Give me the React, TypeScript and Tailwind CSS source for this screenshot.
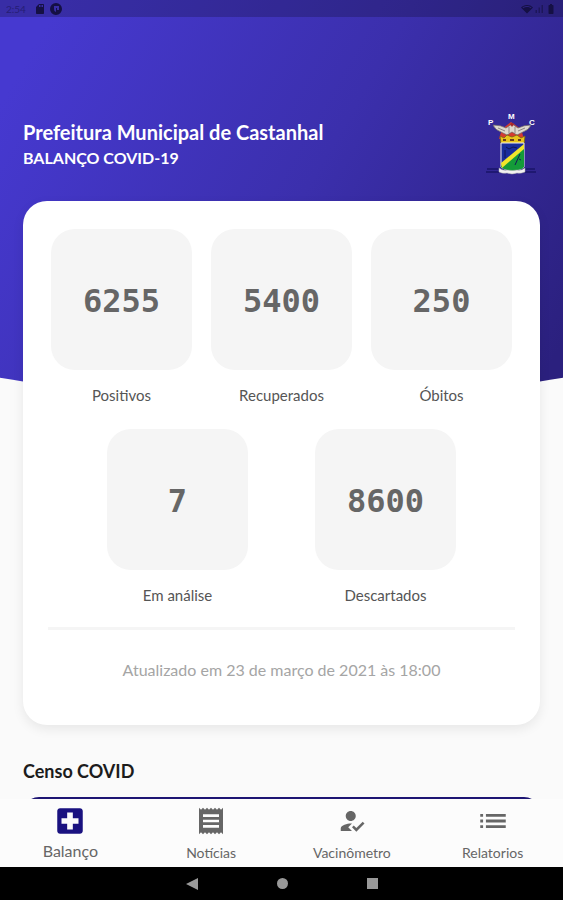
import type { ReactNode } from "react";
import { MdLocalHospital, MdReceipt, MdHowToReg, MdList, MdSdCard, MdNetworkWifi, MdSignalCellularAlt, MdBatteryFull } from "react-icons/md";

type Stat = { label: string; value: string };

const firstRow: Stat[] = [
  { label: "Positivos", value: "6255" },
  { label: "Recuperados", value: "5400" },
  { label: "Óbitos", value: "250" },
];

const secondRow: Stat[] = [
  { label: "Em análise", value: "7" },
  { label: "Descartados", value: "8600" },
];

function StatTile({ label, value }: Stat) {
  return (
    <div className="flex w-[141px] flex-col items-center">
      <dd className="flex aspect-square w-full items-center justify-center rounded-3xl bg-[#f5f5f5] pt-0.5 font-['DejaVu_Sans_Mono',monospace] text-[32px] font-bold text-[#666]">
        {value}
      </dd>
      <dt className="order-last mt-[13px] text-[15px] leading-6 text-[#555]">{label}</dt>
    </div>
  );
}

function NavItem({ label, icon, active = false }: { label: string; icon: ReactNode; active?: boolean }) {
  return (
    <button type="button" className="flex flex-1 flex-col items-center pt-2">
      <span className={active ? "flex h-7 items-center text-[#1a1280]" : "flex h-7 items-center text-[#666]"}>{icon}</span>
      <span className={active ? "text-base leading-8 text-[#666]" : "text-sm leading-9 text-[#666]"}>{label}</span>
    </button>
  );
}

function Crest() {
  return (
    <svg viewBox="0 0 54 64" className="h-16 w-[54px]" role="img" aria-label="Brasão de Castanhal">
      <path d="M2 61h50M3 58h13M38 58h13" stroke="#1a1468" strokeWidth="1.5" />
      <g fill="#fff" fontFamily="Liberation Sans" fontSize="8" fontWeight="bold">
        <text x="4" y="14">P</text>
        <text x="24" y="8">M</text>
        <text x="45" y="14">C</text>
      </g>
      <path d="M18 18l9-7 10 7 3 10H15z" fill="#d63a30" />
      <path d="M9 14q8 0 13 3l6-4 6 4q6-3 13-3-2 5-8 7l-6 3-5-3-5 3-6-3q-6-2-8-7z" fill="#ddd8ce" stroke="#6b6362" strokeWidth=".7" />
      <path d="M14 17l7 3M41 17l-7 3M25 16v6M31 16v6" stroke="#8d8584" />
      <path d="M26 13q2-2 4 0l-2 3z" fill="#a52828" />
      <path d="M16 25l4 2 3-3 5 2 5-2 4 3 4-2-1 8H17z" fill="#e8c51c" stroke="#766316" strokeWidth=".8" />
      <path d="M19 29h3M26 29h4M34 29h3" stroke="#6a3c1b" strokeWidth="2" />
      <path d="M17 32h23v24q-3 3-11.500 4Q20 59 17 56z" fill="#182d9d" stroke="#eee" strokeWidth="1" />
      <path d="M40 36v20q-3 3-11.500 4-8-1-11.500-4v-1z" fill="#149b39" />
      <path d="M40 33v5L18 57l-1-5z" fill="#f1e52b" />
      <path d="M22 36l3 2 4-2 4 1M21 39v8M36 43l-5 11M35 48l2 1" stroke="#101657" fill="none" />
      <path d="M15 57q4 3 8 2 6 1 10 0 4 1 8-2v4q-5 2-8 1-5 2-10 0-4 1-8-1z" fill="#f2f2f2" stroke="#aaa" strokeWidth=".5" />
    </svg>
  );
}

export default function App() {
  return (
    <div className="relative isolate flex h-screen flex-col overflow-hidden bg-[#fafafa] font-[Lato,sans-serif]">
      <div className="absolute -inset-x-[15%] top-0 -z-10 h-[397px] rounded-b-[50%_53px] bg-linear-[120deg,#4639d0_15%,#3b2fac_52%,#2b207e_88%]" />

      <div className="flex h-[17px] shrink-0 items-center bg-black/20 px-[6px] text-[#151044]">
        <span className="text-[10px] leading-4 opacity-50">2:54</span>
        <MdSdCard className="ml-2 size-3" />
        <svg viewBox="0 0 12 12" className="ml-1 size-3" aria-hidden="true">
          <path fillRule="evenodd" d="M6 0a6 6 0 100 12A6 6 0 006 0zM4 3h5v4H7V5H6v4a3 3 0 01-2-3z" fill="currentColor" />
        </svg>
        <MdNetworkWifi className="ml-auto size-3" />
        <MdSignalCellularAlt className="size-3 opacity-60" />
        <MdBatteryFull className="size-3" />
      </div>

      <main className="min-h-0 flex-1 overflow-hidden px-[23px]">
        <header className="flex items-center justify-between pt-[94px] pr-[2px] text-white">
          <div className="pt-1">
            <h1 className="text-xl leading-[26px] font-bold">Prefeitura Municipal de Castanhal</h1>
            <p className="text-base leading-[26px] font-bold">BALANÇO COVID-19</p>
          </div>
          <Crest />
        </header>

        <section className="mt-[26px] h-[524px] rounded-3xl bg-white px-[25px] pt-7 shadow-[0_4px_12px_rgba(0,0,0,0.08)]">
          <dl className="flex flex-col gap-[22px]">
            <div className="flex justify-between px-[3px]">
              {firstRow.map((s) => <StatTile key={s.label} {...s} />)}
            </div>
            <div className="flex justify-center gap-[67px]">
              {secondRow.map((s) => <StatTile key={s.label} {...s} />)}
            </div>
          </dl>
          <hr className="mt-5 border-0 border-t-3 border-[#f5f5f5]" />
          <p className="mt-7 text-center text-base leading-6 text-[#a5a5a5]">Atualizado em 23 de março de 2021 às 18:00</p>
        </section>

        <h2 className="mt-8 text-lg leading-7 font-bold text-[#1c1c1c]">Censo COVID</h2>
        <div className="mt-3 h-32 rounded-2xl bg-[#1d1573]" />
      </main>

      <nav className="flex h-[68px] shrink-0 bg-[#fcfcfc]">
        <NavItem active label="Balanço" icon={<MdLocalHospital size={34} />} />
        <NavItem label="Notícias" icon={<MdReceipt size={32} />} />
        <NavItem label="Vacinômetro" icon={<MdHowToReg size={30} />} />
        <NavItem label="Relatorios" icon={<MdList size={34} />} />
      </nav>

      <div className="flex h-[33px] shrink-0 items-center justify-center gap-[79px] bg-black text-[#999]">
        <button type="button" aria-label="Voltar">
          <svg viewBox="0 0 12 12" className="size-3"><path d="M12 0v12L0 6z" fill="currentColor" /></svg>
        </button>
        <button type="button" aria-label="Início" className="size-[11px] rounded-full bg-[#999]" />
        <button type="button" aria-label="Recentes" className="size-[11px] bg-[#999]" />
      </div>
    </div>
  );
}
